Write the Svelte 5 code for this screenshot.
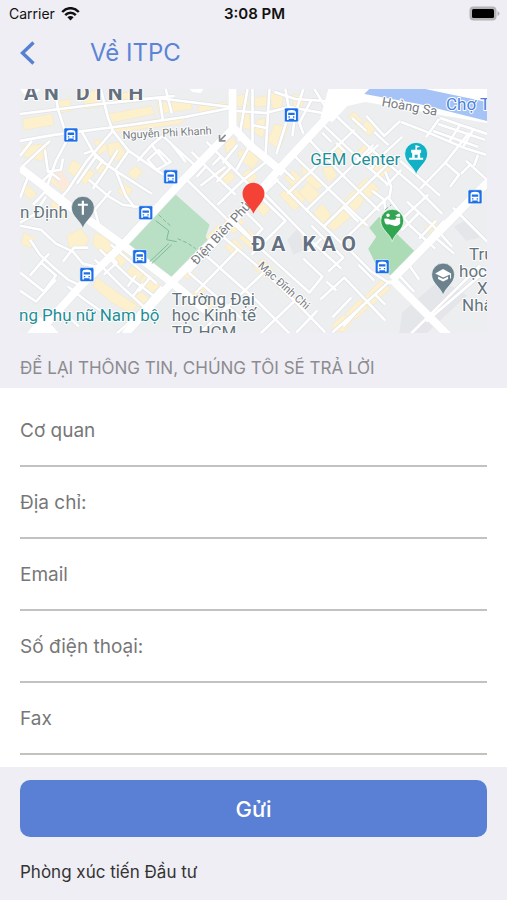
<script>
  const fields = [
    { id: "organization", label: "Cơ quan", type: "text" },
    { id: "address", label: "Địa chỉ:", type: "text" },
    { id: "email", label: "Email", type: "email" },
    { id: "phone", label: "Số điện thoại:", type: "tel" },
    { id: "fax", label: "Fax", type: "tel" },
  ];

  let values = $state({
    organization: "",
    address: "",
    email: "",
    phone: "",
    fax: "",
  });

  const pinShape =
    "M0 21C-2 13-11.5 9-11.5 0A11.5 11.5 0 1 1 11.5 0C11.5 9 2 13 0 21Z";

  const stations = [
    [51, 46],
    [151, 88],
    [126, 124],
    [120, 168],
    [67, 186],
    [272, 26],
    [456, 108],
    [363, 178],
  ];

  const blocks = [
    "M3 30L32 25 34 36 4 41Z M38 12L50 10 52 22 40 24Z M60 3L79 1 82 17 66 20Z",
    "M88 25L132 17 135 25 90 34Z M94 4L118 3 119 13 96 15Z M137 14L170 11 173 20 139 25Z",
    "M89 37L142 29 168 28 160 35 92 44Z M178 17L207 13 207 21 180 25Z M2 57L28 55 22 72 4 68Z",
    "M30 80L50 96 43 103 28 91Z M53 71L64 78 56 89 47 82Z M74 52L84 50 88 61 79 66Z",
    "M88 55L99 53 106 65 97 73 89 67Z M65 79L75 84 66 96 58 90Z M79 72L90 79 84 87 75 81Z",
    "M7 96L17 105 10 111 3 103Z M103 94L113 101 106 110 98 103Z M115 77L123 83 116 91 108 85Z",
    "M35 107L51 119 44 129 30 116Z M47 147L61 140 69 151 62 162 49 158Z M4 144L15 149 11 159 1 155Z",
    "M75 144L85 148 94 158 86 166 73 156Z M89 170L100 160 110 168 101 179Z M113 177L124 186 116 194 106 184Z",
    "M77 189L95 202 117 217 111 225 92 214 73 198Z M126 184L141 197 132 205 120 193Z M121 203L130 210 120 219 111 211Z",
    "M216 7L228 5 230 17 218 18Z M219 22L230 21 231 41 220 38Z M234 9L247 7 247 17 236 18Z",
    "M238 31L246 29 244 49 233 43Z M250 4L264 4 262 20 253 19Z M255 35L269 38 260 61 248 52Z",
    "M274 5L286 9 282 20 274 17Z M205 55L213 48 217 55 207 65Z M218 63L228 60 240 71 233 80 220 71Z",
    "M197 91L206 78 216 88 207 97Z M221 87L230 80 238 88 229 97Z M265 89L274 81 283 90 275 99Z",
    "M279 103L289 94 302 107 294 118Z M260 106L272 96 286 110 275 122Z M237 120L245 113 252 119 244 128Z",
    "M282 76L291 83 305 96 298 101 284 90Z M303 80L312 77 318 87 309 94Z M341 40L347 31 357 38 350 47Z",
    "M329 27L335 23 343 31 338 38Z M313 60L319 51 327 58 321 67Z M337 65L345 55 354 63 346 73Z",
    "M353 80L364 71 373 80 360 92Z M336 99L348 89 360 100 347 112Z M328 108L336 101 345 111 333 127 315 142 307 137Z",
    "M294 124L303 115 312 126 303 136Z M205 130L215 123 225 134 215 145 205 138Z M186 149L199 136 207 145 195 158Z",
    "M219 149L229 140 239 150 231 160Z M205 158L215 150 224 159 215 168Z M233 178L243 170 254 181 245 190Z",
    "M173 204L184 195 188 200 177 210Z M180 216L190 210 196 216 184 224Z M341 134L346 127 349 131 344 139Z",
    "M351 202L363 191 371 200 350 220 342 213Z M335 216L342 210 349 219 336 231 326 225Z M315 234L324 226 333 234 325 243 312 243Z",
    "M405 139L414 130 423 139 414 148Z M160 184L167 176 175 184 168 191Z",
  ];

  const minorRoads = [
    "M0 25L80 15 138 9 211 18",
    "M0 52L34 46 110 36 165 28 211 19",
    "M35 0L38 20 46 45",
    "M81 0L88 28 93 42 109 62",
    "M119 0L123 10 155 7 M140 10L143 30 M146 0L152 24",
    "M49 48L36 72 27 98",
    "M0 67L12 52 M3 77L30 52",
    "M62 43L76 68 96 82 132 105",
    "M93 42L67 72 48 101 39 111",
    "M76 68L57 95 M64 65L72 62 83 72 77 80",
    "M98 61L84 84 73 100 M109 62L95 82",
    "M109 62L141 84 160 96",
    "M118 72L132 56 143 47 M132 56L147 75 M128 71L139 61 151 73 137 81Z",
    "M143 47L178 79 M150 53L166 73",
    "M20 95L31 84 40 91 M25 61L28 83 41 81 43 70",
    "M69 91L88 107 103 116 132 120",
    "M96 82L106 107 115 119 M91 102L75 121 81 143",
    "M8 88L0 109 M13 116L25 103 48 122 M26 108L14 126 0 134",
    "M0 137L21 141 36 155 53 163 63 175 79 179",
    "M43 173L54 159 68 159 M10 151L20 166 35 180 48 191 61 197",
    "M10 187L21 174 36 187 24 203 0 184 M21 174L29 165",
    "M0 202L16 213 36 191 M40 220L59 238 M48 198L66 212 95 232",
    "M80 161L111 190 140 212 M91 156L137 195",
    "M75 171L104 200 125 219 M89 166L97 174 84 186 M116 187L108 198 M123 195L113 208",
    "M131 188L119 203 M142 198L114 230 97 245",
    "M172 63L192 83 216 106 M187 53L217 83 242 109",
    "M193 76L201 68 211 79 197 93 M177 88L187 77 M166 90L199 122 213 136",
    "M181 97L206 78 M198 116L224 91 252 69 M214 134L259 90",
    "M203 74L218 56 M217 81L230 57",
    "M228 0L219 52 M233 0L233 61 M250 0L246 67",
    "M217 22L246 24 270 18 303 24 M232 36L247 39",
    "M266 0L270 23 257 65 M284 0L276 24 273 47 M292 11L280 34 284 45",
    "M255 3L276 10 306 12 M295 0L309 23",
    "M253 87L294 128 327 159 M242 102L285 146 322 180",
    "M274 66L311 102 348 137 M290 51L325 88 360 122",
    "M305 37L343 73 369 96 M317 27L355 63 398 100 423 125",
    "M268 105L313 62 335 41 M286 122L332 78 354 56 M304 138L377 67",
    "M322 154L370 107 M275 91L260 77 M324 118L339 133 M353 102L365 111 366 121",
    "M312 53L303 44 M326 63L317 54 M340 73L359 56 M347 42L333 29 M369 56L355 43",
    "M226 123L243 140 233 151 209 126 M242 109L266 132 232 166",
    "M200 145L242 181 276 213 306 244 M215 136L260 177 290 204 303 188 284 170",
    "M184 163L211 137 M183 164L237 212 270 245 M209 143L169 184 M169 184L222 230",
    "M245 183L200 226 181 244 M219 160L176 204 M281 207L241 245 M298 222L277 244",
    "M292 137L324 169 309 183 M302 150L289 163 M326 157L352 183 371 195",
    "M301 211L325 189 366 232 M317 202L307 193 M332 209L313 229 M344 216L324 238",
    "M371 192L337 223 313 244 M355 192L339 176 M356 206L366 216",
    "M366 83L372 98 370 110 391 137 416 160",
    "M381 72L421 107 M382 81L367 97 M383 48L359 70 352 80",
    "M388 113L413 136 433 158 M399 125L382 142 M409 106L383 130 M417 132L400 150",
    "M401 100L426 74 440 86 431 98 M426 74L450 44 M452 75L442 85",
    "M347 27L365 47 381 32 M382 33L405 42 445 59 467 66",
    "M421 29L468 45 M419 35L466 51 M414 42L459 58 M407 48L420 30 M430 53L441 36 M444 58L454 41",
    "M447 72L468 91 M459 66L455 77 M434 119L468 153 M425 132L413 146 435 165",
    "M391 178L400 191 M385 206L407 226 M380 187L395 203 M407 233L468 181 M392 245L461 177",
  ];

  const mainRoads = [
    "M0 79L48 116 104 157 151 193 186 222",
    "M17 246L60 198 104 155 160 95 214 39",
    "M105 246L153 193 225 120 260 80 309 27 338 0",
    "M213 0L213 38 230 56 264 84",
    "M470 92L373 191 M373 191L431 249",
  ];
</script>

<svelte:head>
  <title>Về ITPC</title>
</svelte:head>

<main class="page">
  <div class="status-bar">
    <div class="carrier">
      <span>Carrier</span>
      <svg width="19" height="14" viewBox="0 0 19 14" aria-hidden="true">
        <g fill="none" stroke="#111" stroke-width="2.5">
          <path d="M1.2 5C6-.1 13-.1 17.8 5" />
          <path d="M4.2 8.1C7.2 5.1 11.8 5.1 14.8 8.1" />
        </g>
        <path d="M6.4 10.3C8.2 8.5 10.8 8.5 12.6 10.3L9.5 13.5Z" fill="#111" />
      </svg>
    </div>
    <strong>3:08 PM</strong>
    <svg class="battery" width="31" height="15" viewBox="0 0 31 15" aria-hidden="true">
      <rect x="0.5" y="0.5" width="27" height="14" rx="4" fill="#b4b4b6" />
      <rect x="3" y="3" width="22" height="9" rx="1.5" fill="#000" />
      <path d="M28.5 5Q30.5 6 30.5 7.5T28.5 10Z" fill="#b4b4b6" />
    </svg>
  </div>

  <header class="nav-bar">
    <button class="back" type="button" aria-label="Quay lại">
      <svg width="16" height="24" viewBox="0 0 16 24" aria-hidden="true">
        <path d="M13.5 1.5L2.5 12 13.5 22.5" fill="none" stroke="#5880d2" stroke-width="3.4" />
      </svg>
    </button>
    <h1>Về ITPC</h1>
  </header>

  <section class="map-section" aria-label="Bản đồ">
    <svg class="map" viewBox="0 0 468 245">
      <rect width="468" height="245" fill="#eceef0" />

      <!-- built-up blocks and parks -->
      <path
        d="M268 151L279 139 285 161 274 166Z M435 138L449 130 460 149 447 152Z M383 224L421 191 448 207 407 245 380 245Z"
        fill="#e4e6ea"
      />
      <g fill="#fdf0cc" stroke="#f3e7cb" stroke-width="0.6">
        {#each blocks as block}
          <path d={block} />
        {/each}
      </g>
      <path d="M30 86L40 80 50 94 42 102Z" fill="#fbe9dc" />
      <path d="M107 157L155 105 190 136 186 148 190 154 151 191Z" fill="#b9e0c5" />
      <path d="M349 160L357 148 350 139 360 128 397 164 374 187 360 183Z" fill="#acdcb6" />

      <!-- streets: grey casing first, white surface on top -->
      <g class="minor casing">
        {#each minorRoads as road}
          <path d={road} />
        {/each}
      </g>
      <g class="main casing">
        {#each mainRoads as road}
          <path d={road} />
        {/each}
      </g>
      <g class="minor">
        {#each minorRoads as road}
          <path d={road} />
        {/each}
      </g>
      <g class="main">
        {#each mainRoads as road}
          <path d={road} />
        {/each}
      </g>
      <g fill="none" stroke="#7fb99a" stroke-width="1">
        <path d="M130 173L149 155 M132 175L152 156 M136 132L149 142 147 151 157 153" />
        <path d="M139 126L145 132 152 138 M158 150L167 154 176 160 M366 121L372 116" stroke-dasharray="4 2" />
      </g>
      <path d="M7 245L20 228 33 238 39 245Z M309 0L468 0 468 34 346 13 328 17 313 33 301 29Z" fill="#fff" />
      <path d="M350 0L406 0 468 13 468 32 400 15 345 5Z" fill="#a5c3f6" />
      <path d="M0 0H20L14 7 4 5Z M170 0H184L181 4 173 3Z" fill="#fff" />
      <path d="M206 46L200 52 M200 46V52H206" fill="none" stroke="#8a8e92" stroke-width="1.6" />

      <!-- street names -->
      <g class="label street">
        <text class="small" transform="translate(103 50) rotate(-3)">Nguyễn Phi Khanh</text>
        <text transform="translate(177 177) rotate(-47)">Điện Biên Phủ</text>
        <text class="small" transform="translate(238 178) rotate(42)">Mạc Đĩnh Chi</text>
        <text transform="translate(362 17) rotate(10)">Hoàng Sa</text>
      </g>

      <g class="label district">
        <text x="4" y="11">AN DINH</text>
        <text x="232" y="162">ĐA KAO</text>
      </g>

      <g class="label place">
        <text x="0" y="129">n Định</text>
        <text x="152" y="216">Trường Đại</text>
        <text x="152" y="233">học Kinh tế</text>
        <text x="152" y="250">TP. HCM</text>
        <text x="450" y="171">Trư</text>
        <text x="440" y="188">học</text>
        <text x="458" y="205">X</text>
        <text x="443" y="222">Nhâ</text>
        <text class="teal" x="-1" y="233">ng Phụ nữ Nam bộ</text>
        <text class="teal" x="291" y="76">GEM Center</text>
        <text class="blue" x="427" y="21">Chợ T</text>
      </g>

      {#each stations as [x, y]}
        <g transform={`translate(${x} ${y})`}>
          <rect x="-7" y="-7" width="14" height="14" rx="1.5" fill="#1c6fe8" stroke="#fff" stroke-width="0.6" />
          <path
            fill-rule="evenodd"
            fill="#fff"
            d="M-4.5 5V-2.5Q-4.5-5 0-5T4.5-2.5V5H2.8V3.7H-2.8V5Z M-3.2-2.3V0H3.2V-2.3Z M-3 1.4V2.7H-1.6V1.4Z M1.6 1.4V2.7H3V1.4Z"
          />
        </g>
      {/each}

      <g transform="translate(63 119)">
        <path d={pinShape} fill="#6c838d" stroke="#fff" stroke-width="0.7" />
        <path d="M0-7V7 M-5-3H5" stroke="#fff" stroke-width="2.2" fill="none" />
      </g>
      <g transform="translate(397 65)">
        <path d={pinShape} fill="#12b0c5" stroke="#fff" stroke-width="0.7" />
        <path
          fill="#fff"
          fill-rule="evenodd"
          d="M-.7-9L4-7.5.7-6V-4H5V-1H4V4H7V6H-7V4H-4V-1H-5V-4H-.7Z M-1.5 1V4H1.5V1Z"
        />
      </g>
      <g transform="translate(373 132)">
        <path d={pinShape} fill="#32a552" stroke="#fff" stroke-width="0.7" />
        <path
          fill="#fff"
          d="M-8-2Q-5-3-2-1L3-1 4-3 8-3V3Q5 6 2 5L-3 3.500Q-8 5-8-2Z M-6-5.500A1.800 1.800 0 1 1-2.400-5.500A1.800 1.800 0 1 1-6-5.500Z M3-5L6-7 8-7V-4H5Z"
        />
      </g>
      <g transform="translate(424 186)">
        <path d={pinShape} fill="#6c838d" stroke="#fff" stroke-width="0.7" />
        <path fill="#fff" d="M-8-1L0-5.500 8-1V4H7V0L0 3Z M-5 2L0 4.500 5 2V4.500L0 7-5 4.500Z" />
      </g>
      <g transform="translate(234 105)">
        <path d="M0 20C-2 14-11 8-11 0A11 11 0 1 1 11 0C11 8 2 14 0 20Z" fill="#f44336" />
      </g>
    </svg>
  </section>

  <form class="contact-form" onsubmit={(event) => event.preventDefault()}>
    <h2>ĐỂ LẠI THÔNG TIN, CHÚNG TÔI SẼ TRẢ LỜI</h2>

    <div class="fields">
      {#each fields as field}
        <input
          id={field.id}
          name={field.id}
          type={field.type}
          placeholder={field.label}
          aria-label={field.label}
          bind:value={values[field.id]}
        />
      {/each}
    </div>

    <div class="actions">
      <button class="submit" type="submit">Gửi</button>
    </div>
  </form>

  <p class="department">Phòng xúc tiến Đầu tư</p>
</main>

<style>
  :global(body) {
    margin: 0;
    background: #efeef4;
  }

  .page {
    min-height: 100vh;
    background: #efeef4;
    color: #333333;
    font-family: Inter, "Liberation Sans", sans-serif;
  }

  .status-bar {
    display: grid;
    grid-template-columns: 1fr auto 1fr;
    align-items: center;
    height: 27px;
    padding: 0 7px 0 9px;
    color: #111111;
    font-size: 14px;
    line-height: 20px;
  }

  .status-bar strong {
    font-size: 15px;
    font-weight: 600;
  }

  .carrier {
    display: flex;
    align-items: center;
    gap: 6px;
  }

  .battery {
    justify-self: end;
  }

  .nav-bar {
    display: flex;
    align-items: center;
    gap: 48px;
    height: 51px;
    padding: 0 20px;
  }

  .back {
    display: flex;
    padding: 0 6px 0 0;
    border: 0;
    background: none;
    cursor: pointer;
  }

  .nav-bar h1 {
    margin: 0;
    color: #5c84d6;
    font-size: 24px;
    font-weight: 400;
    line-height: 32px;
  }

  .map-section {
    padding: 11px 20px 0;
  }

  .map {
    display: block;
    width: 100%;
    height: auto;
    overflow: hidden;
  }

  .minor,
  .main {
    fill: none;
    stroke: #ffffff;
    stroke-linejoin: round;
  }

  .minor {
    stroke-width: 2.6;
  }

  .main {
    stroke-width: 8;
  }

  .minor.casing {
    stroke: #e0e3e7;
    stroke-width: 4;
  }

  .main.casing {
    stroke: #e4e6ea;
    stroke-width: 9;
  }

  .label {
    font-family: Roboto, "Liberation Sans", sans-serif;
    paint-order: stroke;
    stroke: #ffffff;
    stroke-width: 2;
    stroke-linejoin: round;
  }

  .street {
    fill: #777b80;
    font-size: 13px;
  }

  .street .small {
    font-size: 11px;
  }

  .district {
    fill: #64707f;
    font-size: 21px;
    font-weight: 700;
    letter-spacing: 6px;
  }

  .place {
    fill: #65747c;
    font-size: 17px;
  }

  .place .teal {
    fill: #1f8f97;
  }

  .place .blue {
    fill: #4a80dc;
  }

  .contact-form h2 {
    margin: 0;
    padding: 23px 20px 8px;
    color: #8c8b90;
    font-size: 17px;
    font-weight: 400;
    line-height: 24px;
  }

  .fields {
    padding: 7px 20px 12px;
    background: #ffffff;
  }

  .fields input {
    display: block;
    box-sizing: border-box;
    width: 100%;
    height: 72px;
    padding: 0;
    border: 0;
    border-bottom: 2px solid #c2c2c2;
    border-radius: 0;
    outline: none;
    background: none;
    color: #333333;
    font-family: inherit;
    font-size: 19px;
  }

  .fields input::placeholder {
    color: #777777;
    opacity: 1;
  }

  .fields input:focus {
    border-bottom-color: #5a80d6;
  }

  .actions {
    padding: 13px 20px 0;
  }

  .submit {
    width: 100%;
    height: 57px;
    border: 0;
    border-radius: 10px;
    background: #5a80d6;
    color: #ffffff;
    font-family: inherit;
    font-size: 22px;
    font-weight: 500;
    cursor: pointer;
  }

  .department {
    margin: 0;
    padding: 23px 20px 15px;
    font-size: 17px;
    line-height: 24px;
  }
</style>
